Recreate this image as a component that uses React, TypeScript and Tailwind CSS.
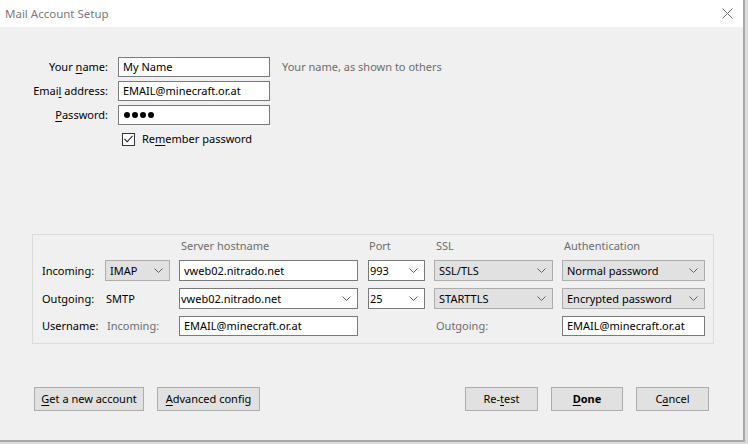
import React from 'react'

const font = { fontFamily: '"Noto Sans", "Segoe UI", sans-serif' }

function Chevron() {
  return (
    <svg width="9" height="5" viewBox="0 0 9 5" className="shrink-0">
      <path d="M0.5 0.5 L4.5 4.5 L8.5 0.5" fill="none" stroke="#606060" strokeWidth="1" />
    </svg>
  )
}

function Key({ children }: { children: React.ReactNode }) {
  return <span className="underline underline-offset-2">{children}</span>
}

// height comes from className so there is no clash between two h-[] classes
function TextBox({ value, className = '' }: { value: string; className?: string }) {
  return (
    <div className={`flex items-center border border-[#7a7a7a] bg-white px-[4px] text-[11px] text-black ${className}`}>
      {value}
    </div>
  )
}

function Combo({ value, className = '' }: { value: string; className?: string }) {
  return (
    <div className={`flex h-[21px] items-center justify-between border border-[#7a7a7a] bg-white pl-[1px] pr-[6px] text-[11px] text-black ${className}`}>
      <span>{value}</span>
      <Chevron />
    </div>
  )
}

function Select({ value, className = '' }: { value: string; className?: string }) {
  return (
    <div className={`flex h-[21px] items-center justify-between border border-[#adadad] bg-[#e1e1e1] pl-[4px] pr-[6px] text-[11px] text-black ${className}`}>
      <span>{value}</span>
      <Chevron />
    </div>
  )
}

function Button({ children, className = '' }: { children: React.ReactNode; className?: string }) {
  return (
    <div className={`flex h-[24px] items-center justify-center border border-[#adadad] bg-[#e1e1e1] text-[11px] text-black ${className}`}>
      {children}
    </div>
  )
}

export default function App() {
  return (
    <div className="h-[444px] w-[748px] overflow-hidden bg-[#dcdcdc]" style={font}>
      <div className="flex h-[442px] w-[745px] flex-col border-r-2 border-b-2 border-[#a8a8a8]">
        {/* title bar */}
        <div className="flex h-[27px] shrink-0 items-center justify-between bg-white pl-[5px] pr-[10px]">
          <span className="text-[11.5px] text-[#7a7a7a]">Mail Account Setup</span>
          <svg width="11" height="11" viewBox="0 0 11 11">
            <path d="M0.5 0.5 L10.5 10.5 M10.5 0.5 L0.5 10.5" stroke="#707070" strokeWidth="1" />
          </svg>
        </div>

        <div className="flex flex-1 flex-col bg-[#f0f0f0]">
          {/* identity */}
          <div className="mt-[30px] grid grid-cols-[108px_152px_auto] grid-rows-[20px_20px_20px] items-center gap-x-[10px] gap-y-[4px] text-[11px] leading-[14px] text-black">
            <span className="text-right">Your <Key>n</Key>ame:</span>
            <TextBox value="My Name" className="h-[20px]" />
            <span className="pl-[2px] text-[#6d6d6d]">Your name, as shown to others</span>

            <span className="text-right">Emai<Key>l</Key> address:</span>
            <TextBox value="EMAIL@minecraft.or.at" className="h-[20px]" />
            <span />

            <span className="text-right"><Key>P</Key>assword:</span>
            <div className="flex h-[20px] items-center gap-[2px] border border-[#7a7a7a] bg-white px-[5px]">
              {[0, 1, 2, 3].map((i) => (
                <span key={i} className="h-[6px] w-[6px] rounded-full bg-black" />
              ))}
            </div>
            <span />
          </div>

          <div className="ml-[122px] mt-[7px] flex items-center gap-[7px] text-[11px] leading-[14px] text-black">
            <div className="flex h-[13px] w-[13px] items-center justify-center border border-[#333] bg-white">
              <svg width="9" height="8" viewBox="0 0 9 8">
                <path d="M0.5 4 L3.2 6.8 L8.5 0.8" fill="none" stroke="#222" strokeWidth="1.1" />
              </svg>
            </div>
            <span>Re<Key>m</Key>ember password</span>
          </div>

          {/* server settings */}
          <div className="ml-[32px] mt-[88px] h-[110px] w-[682px] border border-[#dcdcdc] pl-[9px] pt-[4px] text-[11px] leading-[14px]">
            <div className="grid grid-cols-[63px_74px_189px_66px_128px_143px] grid-rows-[14px_21px_21px_20px] items-center gap-y-[7px]">
              <span />
              <span />
              <span className="pl-[2px] text-[#6d6d6d]">Server hostname</span>
              <span className="pl-[1px] text-[#6d6d6d]">Port</span>
              <span className="pl-[2px] text-[#6d6d6d]">SSL</span>
              <span className="pl-[2px] text-[#6d6d6d]">Authentication</span>

              <span className="text-black">Incoming:</span>
              <Select value="IMAP" className="w-[65px]" />
              <TextBox value="vweb02.nitrado.net" className="h-[21px] w-[179px]" />
              <Combo value="993" className="w-[57px]" />
              <Select value="SSL/TLS" className="w-[119px]" />
              <Select value="Normal password" className="w-[143px]" />

              <span className="text-black">Outgoing:</span>
              <span className="pl-[1px] text-black">SMTP</span>
              <Combo value="vweb02.nitrado.net" className="w-[179px]" />
              <Combo value="25" className="w-[57px]" />
              <Select value="STARTTLS" className="w-[119px]" />
              <Select value="Encrypted password" className="w-[143px]" />

              <span className="text-black">Username:</span>
              <span className="pl-[2px] text-[#6d6d6d]">Incoming:</span>
              <TextBox value="EMAIL@minecraft.or.at" className="h-[20px] w-[179px]" />
              <span />
              <span className="pl-[2px] text-[#6d6d6d]">Outgoing:</span>
              <TextBox value="EMAIL@minecraft.or.at" className="h-[20px] w-[143px]" />
            </div>
          </div>

          {/* buttons */}
          <div className="mt-[43px] flex items-center px-[34px] leading-[14px]">
            <Button className="w-[110px]"><span><Key>G</Key>et a new account</span></Button>
            <Button className="ml-[13px] w-[103px]"><span><Key>A</Key>dvanced config</span></Button>
            <div className="flex-1" />
            <Button className="w-[73px]"><span>Re-<Key>t</Key>est</span></Button>
            <Button className="ml-[13px] w-[72px] font-bold"><span><Key>D</Key>one</span></Button>
            <Button className="ml-[13px] w-[73px]"><span>C<Key>a</Key>ncel</span></Button>
          </div>
        </div>
      </div>
    </div>
  )
}
